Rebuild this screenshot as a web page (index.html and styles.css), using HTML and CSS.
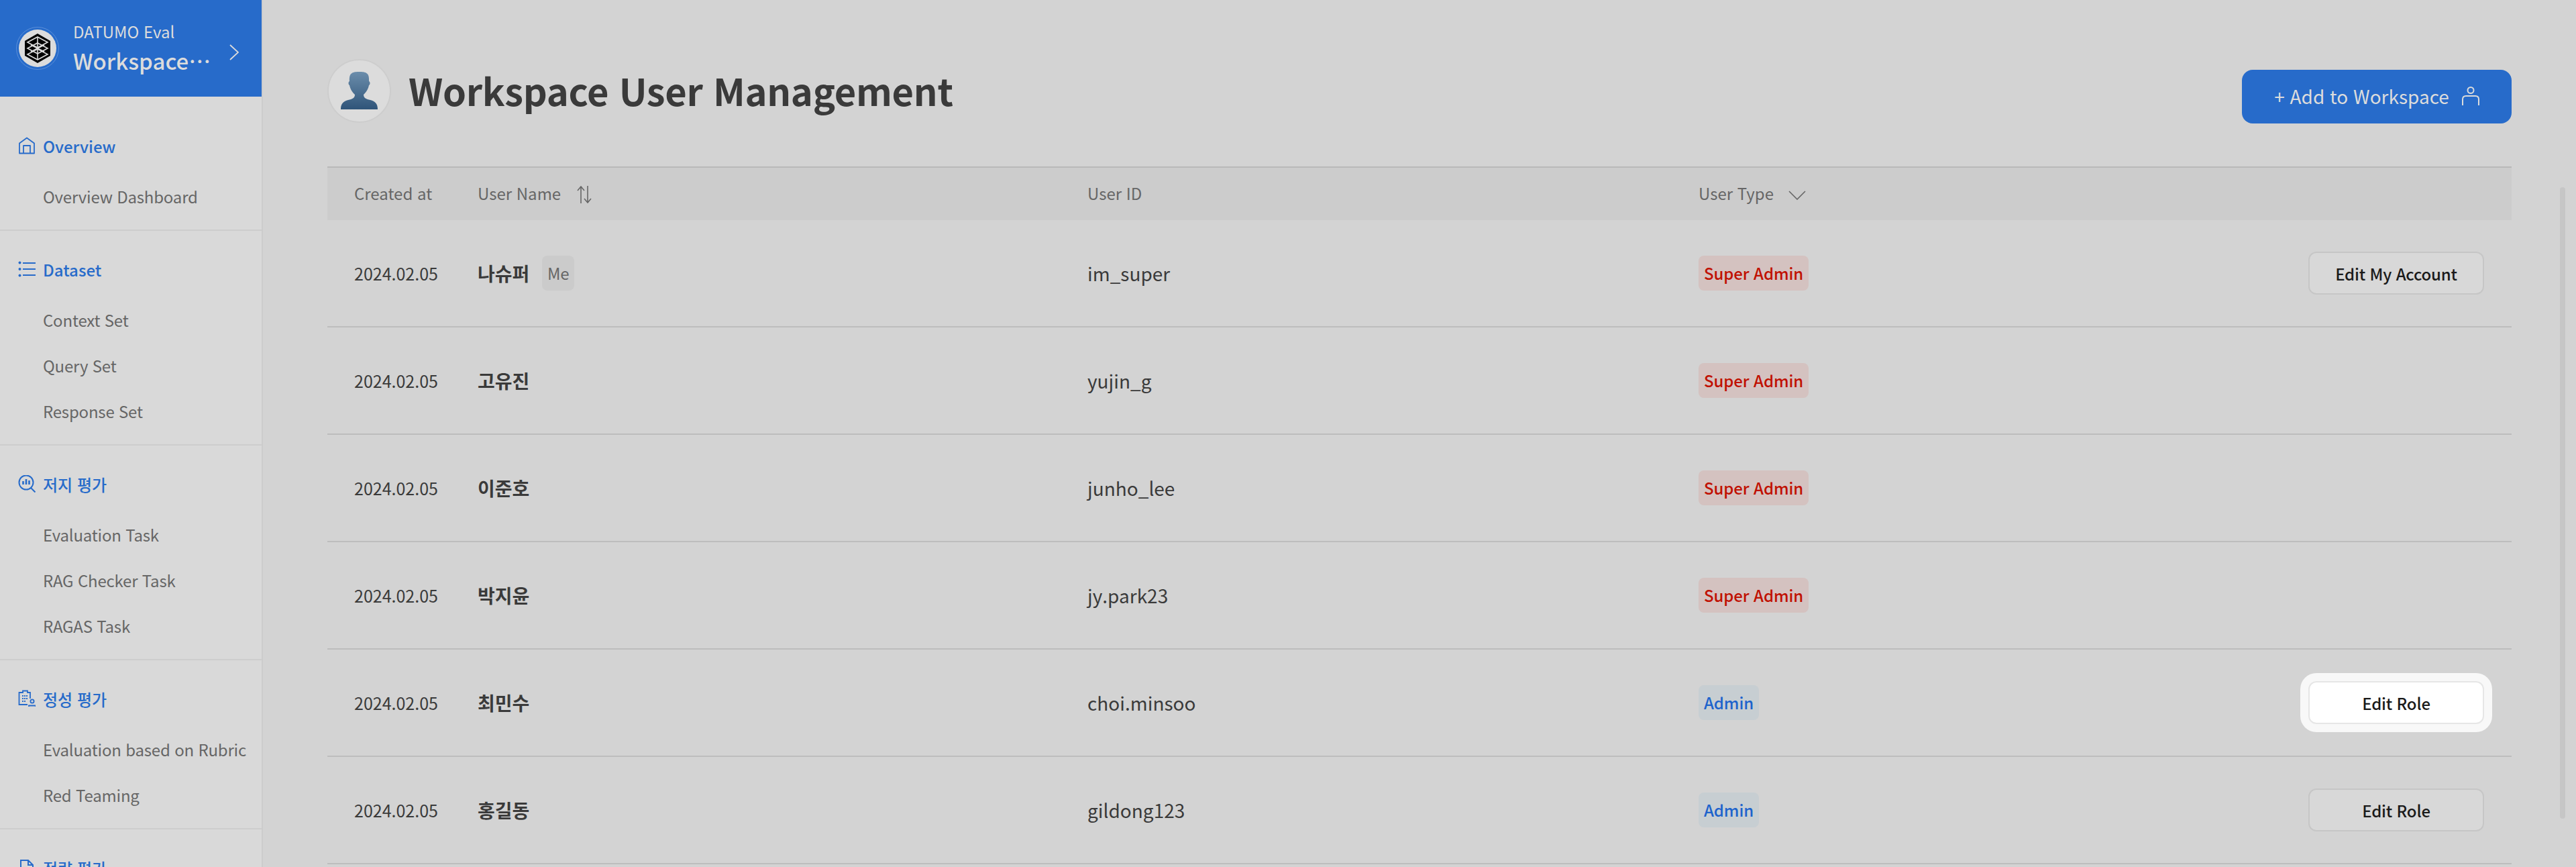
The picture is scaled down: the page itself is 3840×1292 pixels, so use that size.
FILE: index.html

```html
<!DOCTYPE html>
<html lang="ko">
<head>
  <meta charset="UTF-8">
  <meta name="viewport" content="width=device-width, initial-scale=1.0">
  <title>Workspace User Management</title>
  <link rel="stylesheet" href="styles.css">
</head>
<body>
  <aside class="sidebar">
    <div class="brand">
      <svg class="brand-logo" viewBox="0 0 64 64">
        <circle cx="32" cy="32" r="31.5" fill="none" stroke="#5c90da" stroke-width="1"/>
        <circle cx="32" cy="32" r="28" fill="#dcdcdc"/>
        <path d="M32 10 L51 21 V43 L32 54 L13 43 V21 Z" fill="#000"/>
        <g fill="none" stroke="#dcdcdc" stroke-width="1.6">
          <path d="M32 15 L47 23 L32 31 L17 23 Z"/>
          <path d="M32 24 L47 32 L32 40 L17 32 Z"/>
          <path d="M32 33 L47 41 L32 49 L17 41 Z"/>
          <path d="M32 15 V49 M22 27 L42 37 M42 27 L22 37"/>
        </g>
      </svg>
      <div class="brand-text">
        <div class="brand-sub">DATUMO Eval</div>
        <div class="brand-name">Workspace⋯</div>
      </div>
      <svg class="brand-arrow" viewBox="0 0 14 24"><path d="M1 1 L13 12 L1 23" fill="none" stroke="#dcdcdc" stroke-width="1.8"/></svg>
    </div>

    <div class="nav-group first">
      <div class="nav-label">
        <svg class="nav-icon" viewBox="0 0 26 26"><path d="M2 24.5 V9.5 L13 1.5 L24 9.5 V24.5 Z M8 24.5 V13 H18 V24.5" fill="none" stroke="#276bca" stroke-width="1.8" stroke-linejoin="round"/></svg>
        Overview
      </div>
      <div class="nav-item">Overview Dashboard</div>
    </div>

    <div class="nav-group">
      <div class="nav-label">
        <svg class="nav-icon" viewBox="0 0 26 26"><path d="M7 4 H26 M7 13 H26 M7 22 H26" stroke="#276bca" stroke-width="2" fill="none"/><circle cx="2.5" cy="3.5" r="2" fill="#276bca"/><circle cx="2.5" cy="13" r="2" fill="#276bca"/><circle cx="2.5" cy="22.5" r="2" fill="#276bca"/></svg>
        Dataset
      </div>
      <div class="nav-item">Context Set</div>
      <div class="nav-item">Query Set</div>
      <div class="nav-item">Response Set</div>
    </div>

    <div class="nav-group">
      <div class="nav-label">
        <svg class="nav-icon" viewBox="0 0 26 26"><circle cx="12" cy="11" r="10.5" fill="none" stroke="#276bca" stroke-width="2"/><path d="M19 19 L25.5 25.5" stroke="#276bca" stroke-width="2"/><path d="M7.5 9 V14 M12 6 V14 M16.5 8 V14" stroke="#276bca" stroke-width="2.6"/></svg>
        저지 평가
      </div>
      <div class="nav-item">Evaluation Task</div>
      <div class="nav-item">RAG Checker Task</div>
      <div class="nav-item">RAGAS Task</div>
    </div>

    <div class="nav-group">
      <div class="nav-label">
        <svg class="nav-icon" viewBox="0 0 26 26"><path d="M14 22 H1.5 V4 H7 V1.5 H14 V4 H18 V13" fill="none" stroke="#276bca" stroke-width="1.8"/><path d="M6 9 H14 M6 13 H14 M6 17 H12" stroke="#276bca" stroke-width="1.8" stroke-dasharray="2 1"/><circle cx="21" cy="17" r="2.6" fill="none" stroke="#276bca" stroke-width="1.8"/><path d="M16 25 V23.5 H26 V25" fill="none" stroke="#276bca" stroke-width="1.8"/></svg>
        정성 평가
      </div>
      <div class="nav-item">Evaluation based on Rubric</div>
      <div class="nav-item">Red Teaming</div>
    </div>

    <div class="nav-group">
      <div class="nav-label">
        <svg class="nav-icon" viewBox="0 0 26 26"><path d="M4 24 V2 H15 L22 9 V24 Z M15 2 V9 H22" fill="none" stroke="#276bca" stroke-width="2"/></svg>
        정량 평가
      </div>
    </div>
  </aside>

  <main class="main">
    <div class="page-head">
      <svg class="avatar" viewBox="0 0 95 95">
        <defs>
          <linearGradient id="bust" x1="0" y1="0" x2="0" y2="1">
            <stop offset="0" stop-color="#6b8dab"/>
            <stop offset="1" stop-color="#2f5479"/>
          </linearGradient>
        </defs>
        <circle cx="47.5" cy="47.5" r="46.5" fill="#dcdcdc" stroke="#cdcdcd" stroke-width="2"/>
        <path d="M20 75 C20 66 24 63 31 61 C37 60 41 58 41 53 C36 48 34 44 33 39 C31 38 31 34 33 33 C32 20 38 19 47.5 19 C57 19 63 20 62 33 C64 34 64 38 62 39 C61 44 59 48 54 53 C54 58 58 60 64 61 C71 63 75 66 75 75 Z" fill="url(#bust)"/>
      </svg>
      <h1 class="page-title">Workspace User Management</h1>
      <button class="add-btn">+ Add to Workspace
        <svg class="add-icon" viewBox="0 0 26 28"><circle cx="13" cy="5.5" r="4.5" fill="none" stroke="#dcdcdc" stroke-width="2"/><path d="M1 28 V19 C1 15.5 3 14 6 14 H20 C23 14 25 15.5 25 19 V28" fill="none" stroke="#dcdcdc" stroke-width="2"/></svg>
      </button>
    </div>

    <table class="user-table">
      <colgroup>
        <col class="col-date"><col class="col-name"><col class="col-id"><col class="col-type"><col>
      </colgroup>
      <thead>
        <tr>
          <th>Created at</th>
          <th>User Name
            <svg class="sort-icon" viewBox="0 0 24 26"><path d="M7 26 V2 M2 7 L7 1 L12 7 M17 0 V24 M12 19 L17 25 L22 19" fill="none" stroke="#666" stroke-width="1.6"/></svg>
          </th>
          <th>User ID</th>
          <th>User Type
            <svg class="down-icon" viewBox="0 0 26 14"><path d="M1 1 L13 13 L25 1" fill="none" stroke="#666" stroke-width="1.6"/></svg>
          </th>
          <th></th>
        </tr>
      </thead>
      <tbody>
        <tr>
          <td>2024.02.05</td>
          <td><div class="name-cell"><span class="user-name">나슈퍼</span><span class="me-tag">Me</span></div></td>
          <td class="user-id">im_super</td>
          <td><span class="badge super">Super Admin</span></td>
          <td class="actions"><button class="row-btn">Edit My Account</button></td>
        </tr>
        <tr>
          <td>2024.02.05</td>
          <td><div class="name-cell"><span class="user-name">고유진</span></div></td>
          <td class="user-id">yujin_g</td>
          <td><span class="badge super">Super Admin</span></td>
          <td class="actions"></td>
        </tr>
        <tr>
          <td>2024.02.05</td>
          <td><div class="name-cell"><span class="user-name">이준호</span></div></td>
          <td class="user-id">junho_lee</td>
          <td><span class="badge super">Super Admin</span></td>
          <td class="actions"></td>
        </tr>
        <tr>
          <td>2024.02.05</td>
          <td><div class="name-cell"><span class="user-name">박지윤</span></div></td>
          <td class="user-id">jy.park23</td>
          <td><span class="badge super">Super Admin</span></td>
          <td class="actions"></td>
        </tr>
        <tr>
          <td>2024.02.05</td>
          <td><div class="name-cell"><span class="user-name">최민수</span></div></td>
          <td class="user-id">choi.minsoo</td>
          <td><span class="badge admin">Admin</span></td>
          <td class="actions"><button class="row-btn spotlight">Edit Role</button></td>
        </tr>
        <tr>
          <td>2024.02.05</td>
          <td><div class="name-cell"><span class="user-name">홍길동</span></div></td>
          <td class="user-id">gildong123</td>
          <td><span class="badge admin">Admin</span></td>
          <td class="actions"><button class="row-btn">Edit Role</button></td>
        </tr>
      </tbody>
    </table>
    <div class="scroll-thumb"></div>
  </main>
</body>
</html>
```

FILE: styles.css

```css
* {
  box-sizing: border-box;
}
html, body {
  height: 100%;
}
body {
  margin: 0;
  display: flex;
  height: 1292px;
  overflow: hidden;
  background: #d3d3d3;
  font-family: "Noto Sans CJK KR", "Noto Sans", sans-serif;
  color: #3a3a3a;
}

/* sidebar */
.sidebar {
  width: 392px;
  flex-shrink: 0;
  height: 1292px;
  overflow: hidden;
  background: #d9d9d9;
  border-right: 2px solid #cccccc;
}
.brand {
  height: 144px;
  margin-right: -2px;
  display: flex;
  align-items: center;
  background: #276bca;
  color: #dcdcdc;
  padding-left: 24px;
}
.brand-logo {
  width: 64px;
  height: 64px;
  flex-shrink: 0;
}
.brand-text {
  margin-left: 21px;
  width: 233px;
}
.brand-sub {
  font-size: 24px;
  line-height: 36px;
}
.brand-name {
  font-size: 33px;
  line-height: 50px;
  font-weight: 500;
}
.brand-arrow {
  width: 14px;
  height: 24px;
  margin-top: 12px;
}
.nav-group {
  padding: 37px 0 15px;
  border-bottom: 2px solid #cdcdcd;
}
.nav-group.first {
  padding-top: 53px;
}
.nav-label {
  height: 40px;
  display: flex;
  align-items: center;
  gap: 11px;
  padding-left: 27px;
  margin-bottom: 22px;
  color: #276bca;
  font-size: 24px;
  font-weight: 500;
}
.nav-icon {
  width: 26px;
  height: 26px;
  flex-shrink: 0;
}
.nav-item {
  height: 68px;
  line-height: 68px;
  padding-left: 64px;
  color: #666666;
  font-size: 24px;
  letter-spacing: -0.2px;
  white-space: nowrap;
}

/* page */
.main {
  flex: 1;
  position: relative;
  padding: 88px 96px 0;
  overflow: hidden;
}
.page-head {
  height: 160px;
  display: flex;
  align-items: flex-start;
}
.avatar {
  width: 95px;
  height: 95px;
  flex-shrink: 0;
}
.page-title {
  margin: 0 0 0 26px;
  font-size: 56px;
  line-height: 92px;
  font-weight: 700;
  letter-spacing: -0.3px;
  color: #3a3a3a;
}
.add-btn {
  margin: 16px 0 0 auto;
  width: 402px;
  height: 80px;
  padding: 0 0 2px;
  display: flex;
  align-items: center;
  justify-content: center;
  gap: 19px;
  border: 0;
  border-radius: 16px;
  background: #276bca;
  color: #dcdcdc;
  font-family: inherit;
  font-size: 28px;
}
.add-icon {
  width: 26px;
  height: 28px;
}

/* table */
.user-table {
  width: 100%;
  table-layout: fixed;
  border-collapse: separate;
  border-spacing: 0;
}
.col-date {
  width: 224px;
}
.col-name {
  width: 909px;
}
.col-id {
  width: 911px;
}
.col-type {
  width: 800px;
}
.user-table th {
  height: 80px;
  padding: 0 0 3px;
  border-top: 2px solid #b9b9b9;
  background: #cccccc;
  color: #666666;
  font-size: 24px;
  font-weight: 400;
  text-align: left;
}
.user-table td {
  height: 160px;
  padding: 0;
  border-bottom: 2px solid #bdbdbd;
  font-size: 25px;
}
.user-table th:first-child,
.user-table td:first-child {
  padding-left: 40px;
}
.sort-icon {
  width: 24px;
  height: 26px;
  margin-left: 16px;
  vertical-align: -5px;
}
.down-icon {
  width: 26px;
  height: 14px;
  margin-left: 15px;
}
.name-cell {
  display: flex;
  align-items: center;
}
.user-name {
  font-size: 28px;
  font-weight: 700;
}
.me-tag {
  margin-left: 19px;
  width: 48px;
  height: 52px;
  line-height: 52px;
  border-radius: 8px;
  background: #cbcbcb;
  color: #666666;
  font-size: 24px;
  text-align: center;
}
.user-table .user-id {
  font-size: 28px;
}
.badge {
  display: inline-block;
  height: 52px;
  line-height: 52px;
  padding: 0 8px;
  border-radius: 8px;
  font-size: 24px;
  font-weight: 500;
  letter-spacing: -0.1px;
  vertical-align: middle;
}
.badge.super {
  background: #d4c2c0;
  color: #c01000;
}
.badge.admin {
  background: #c7ced2;
  color: #1d63cc;
}
.user-table .actions {
  padding-right: 41px;
  text-align: right;
}
.row-btn {
  width: 262px;
  height: 64px;
  border: 2px solid #c6c6c6;
  border-radius: 12px;
  background: #d8d8d8;
  color: #1a1a1a;
  font-family: inherit;
  font-size: 24px;
  font-weight: 500;
  letter-spacing: -0.2px;
  vertical-align: middle;
}
.row-btn.spotlight {
  background: #ffffff;
  border-color: #e6e6e6;
  box-shadow: 0 0 0 12px #f8f8f8;
}
.scroll-thumb {
  position: absolute;
  left: 3424px;
  top: 279px;
  width: 8px;
  height: 941px;
  border-radius: 4px;
  background: #c6c6c6;
}
```
